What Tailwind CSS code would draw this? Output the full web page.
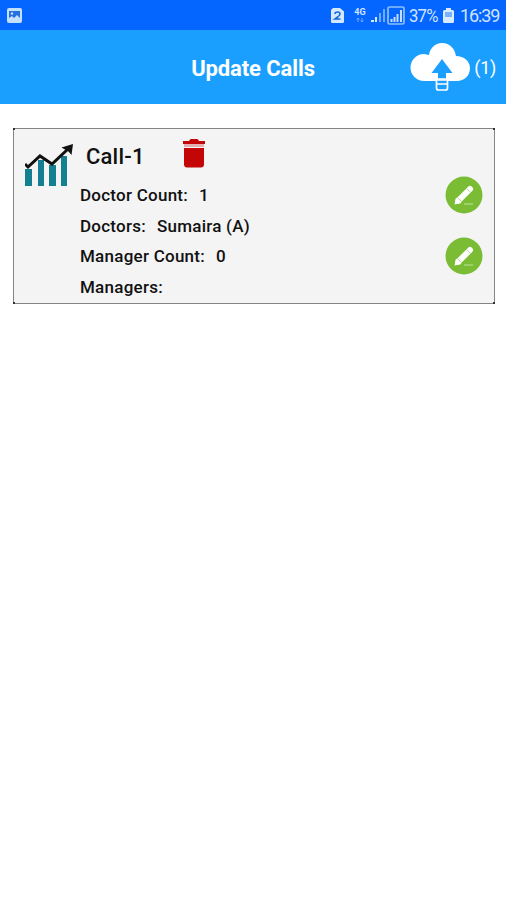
<!DOCTYPE html>
<html lang="en">
<head>
<meta charset="utf-8">
<title>Update Calls</title>
<script src="https://cdn.jsdelivr.net/npm/@tailwindcss/browser@4"></script>
</head>
<body class="bg-white font-['Roboto',sans-serif] text-[#111]">
<div class="flex h-[900px] w-[506px] flex-col overflow-hidden">
  <div class="flex h-[30px] shrink-0 items-center bg-[#0565ff] pt-px pr-[7px] pl-[6px] text-[#cfe4ff]">
    <svg class="size-4" viewBox="0 0 16 16"><rect x="1" y="0" width="15" height="15" rx="2" fill="#c4e0ff"/><path d="M3 3h11v7l-3-3-3 3-2-2-3 2z" fill="#2470dc"/><circle cx="6" cy="5.5" r="1.2" fill="#c4e0ff"/></svg>
    <svg class="ml-auto h-[15px] w-[13px]" viewBox="0 0 13 15"><path d="M2 0h7l4 3.500v10a1.500 1.500 0 0 1-1.500 1.500h-10A1.500 1.500 0 0 1 0 13.500V2z" fill="#d3e9ff"/><path d="M4 6q0-2 2.500-2T9 6q0 1.500-5 5h5.500" fill="none" stroke="#1768de" stroke-width="1.600"/></svg>
    <div class="ml-[9px] flex w-[14px] flex-col items-center">
      <span class="text-[9px] leading-[9px] font-bold">4G</span>
      <svg class="h-[6px] w-2" viewBox="0 0 8 6"><path d="M2 5V1M.5 2.500L2 1l1.500 1.500M6 1v4M4.500 3.500L6 5l1.500-1.500" fill="none" stroke="#72a9ff"/></svg>
    </div>
    <svg class="ml-[4px] h-[15px] w-[14px]" viewBox="0 0 14 15"><path d="M0 12h3v2H0zM4 9h2v5H4z" fill="#d3e9ff"/><path d="M8 5h2v9H8zM12 1h2v13h-2z" fill="#6faaff"/></svg>
    <svg class="ml-[2px] h-[19px] w-[18px]" viewBox="0 0 18 19"><rect x="1" y="1" width="16" height="17" rx="1.500" fill="none" stroke="#8dbfff" stroke-width="1.700"/><path d="M3.500 13h2v3h-2zM6.500 11h2v5h-2zM9.500 8h2v8h-2zM13 4h2v12h-2z" fill="#c3deff"/></svg>
    <span class="ml-[4px] w-[30px] origin-left scale-x-93 text-[18px] leading-[20px] tracking-[-0.9px] whitespace-nowrap">37%</span>
    <svg class="ml-[4px] h-[15px] w-[11px]" viewBox="0 0 11 15"><path d="M3 0h5v2h1.500A1.500 1.500 0 0 1 11 3.500v10A1.500 1.500 0 0 1 9.500 15h-8A1.500 1.500 0 0 1 0 13.500v-10A1.500 1.500 0 0 1 1.500 2H3z" fill="#d8ebff"/><path d="M2 4h7v5H2z" fill="#7cb0fa"/></svg>
    <span class="ml-[6px] w-[39px] text-[18px] leading-[20px] tracking-[-1.1px] whitespace-nowrap">16:39</span>
  </div>

  <header class="grid h-[74px] shrink-0 grid-cols-[1fr_auto_1fr] items-center bg-[#1b9fff] text-white">
    <h1 class="col-start-2 pt-[3px] text-[22px] leading-[26px] font-bold tracking-[-0.1px]">Update Calls</h1>
    <div class="flex items-center justify-end pt-px pr-[10px]">
      <svg class="h-[49px] w-[60px]" viewBox="0 0 60 49"><path d="M14 38A13.500 13.500 0 0 1 14 11l5 1C20 5 25 0 32 0c8 0 13 6 14 13 8 0 14 5 14 12 0 8-6 13-13 13z" fill="white"/><path d="M32 16l10.500 14H36v8h-8v-8h-6.500z" fill="#1b9fff"/><path d="M26.500 36h11v9a2 2 0 0 1-2 2h-7a2 2 0 0 1-2-2z" fill="#1b9fff" stroke="white" stroke-width="1.700"/><path d="M26.500 37h11M26.500 41h11" stroke="white" stroke-width="1.700"/></svg>
      <span class="ml-[4px] text-[18px] leading-[22px] tracking-[-0.3px]">(1)</span>
    </div>
  </header>

  <main class="pl-[13px] pt-[24px]">
    <section class="relative flex h-[176px] w-[482px] border border-[#858585] bg-[#f4f4f4]">
      <i class="absolute -top-px -left-px size-[2px] bg-[#333]"></i>
      <i class="absolute -top-px -right-px size-[2px] bg-[#333]"></i>
      <i class="absolute -bottom-px -left-px size-[2px] bg-[#333]"></i>
      <i class="absolute -right-px -bottom-px size-[2px] bg-[#333]"></i>
      <svg class="mt-[15px] ml-[11px] h-[44px] w-[50px] shrink-0" viewBox="0 0 50 44"><path d="M0 25h7v17H0zM13 16h6v26h-6zM24 21h7v21h-7zM36 12h6v30h-6z" fill="#147f91"/><path d="M0 20l3 3L15 12l12 8L43 5" fill="none" stroke="#111" stroke-width="3"/><path d="M48 0l-1.500 11-3-3.500-7-4z" fill="#111"/></svg>
      <div class="flex grow flex-col pl-[5px]">
        <div class="flex h-[51px] items-start pl-[6px]">
          <h2 class="mt-[15px] w-[97px] text-[22px] leading-[26px] font-medium tracking-[0.2px]">Call-1</h2>
          <svg class="mt-[10px] h-[29px] w-[22px]" viewBox="0 0 22 29"><path d="M1 9h20v17a3 3 0 0 1-3 2.500H4A3 3 0 0 1 1 26zM0 2h6l1.500-2h7L16 2h6v3H0z" fill="#c40505"/><path d="M1 5h20v3H1z" fill="#e2b0b0"/></svg>
        </div>
        <div class="flex h-[122px] flex-col text-[17px] leading-[30.5px] font-medium tracking-[0.25px]">
          <p class="flex gap-[11px]"><span>Doctor Count:</span><span>1</span></p>
          <p class="flex gap-[11px]"><span>Doctors:</span><span>Sumaira (A)</span></p>
          <p class="flex gap-[11px]"><span>Manager Count:</span><span>0</span></p>
          <p>Managers:</p>
        </div>
      </div>
      <div class="mt-[47px] mr-[11px] flex w-[38px] shrink-0 flex-col gap-[23px]">
        <svg class="size-[38px]" viewBox="0 0 38 38"><circle cx="19" cy="19" r="18.500" fill="#7abd35"/><path d="M13.500 24.500L25 13" stroke="white" stroke-width="6" stroke-linecap="round"/><path d="M9.500 28.500l1.500-7 5.500 5.500z" fill="white"/><path d="M12.500 21.500l4 4M21.500 12.500l4 4" stroke="#b5da90" stroke-width="1"/><path d="M19 28h9" stroke="#b5da90" stroke-width="1.200"/></svg>
        <svg class="size-[38px]" viewBox="0 0 38 38"><circle cx="19" cy="19" r="18.500" fill="#7abd35"/><path d="M13.500 24.500L25 13" stroke="white" stroke-width="6" stroke-linecap="round"/><path d="M9.500 28.500l1.500-7 5.500 5.500z" fill="white"/><path d="M12.500 21.500l4 4M21.500 12.500l4 4" stroke="#b5da90" stroke-width="1"/><path d="M19 28h9" stroke="#b5da90" stroke-width="1.200"/></svg>
      </div>
    </section>
  </main>
</div>
</body>
</html>
